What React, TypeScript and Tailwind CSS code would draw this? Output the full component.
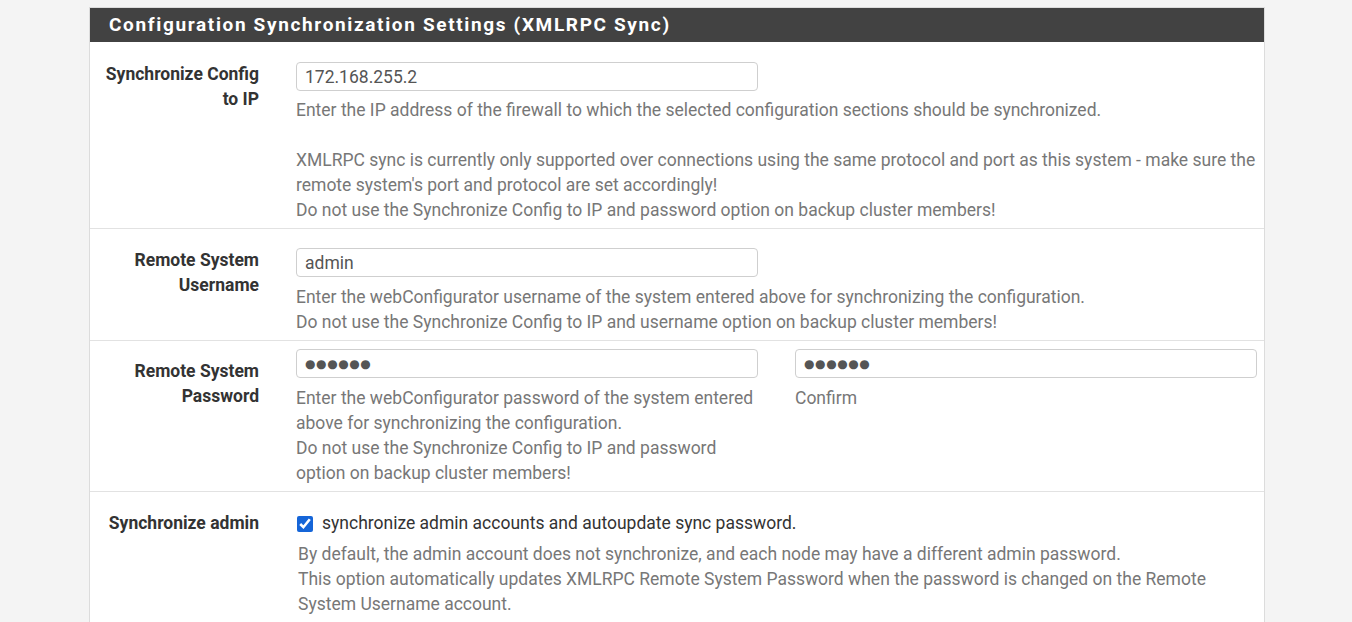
function Help({ children, className = "" }: { children: React.ReactNode; className?: string }) {
  return <div className={`text-[17.5px] leading-[25px] text-[#777] ${className}`}>{children}</div>;
}

function TextInput({ value, dots = false }: { value: string; dots?: boolean }) {
  return (
    <input
      type="text"
      readOnly
      defaultValue={value}
      className={`block w-[462px] h-[29px] rounded-[4px] border border-[#cfcfcf] bg-white text-[#555] outline-none ${
        dots
          ? "pl-[8px] text-[12px] tracking-[0.6px] font-['DejaVu_Sans',sans-serif]"
          : "px-[8px] text-[17.5px] font-[Roboto,sans-serif]"
      }`}
    />
  );
}

export default function App() {
  return (
    <div className="min-h-[622px] bg-[#f4f4f4] pt-[7px] font-[Roboto,sans-serif]">
      <div className="ml-[89px] w-[1176px] bg-white border-x border-t border-[#dcdcdc]">
        <div className="h-[34px] bg-[#424242] pl-[19px] flex items-center text-white text-[19px] font-bold tracking-[1.65px]">
          Configuration Synchronization Settings (XMLRPC Sync)
        </div>

        {/* Synchronize Config to IP */}
        <div className="flex pt-[20px] pb-[5px] border-b border-[#e2e2e2]">
          <div className="w-[169px] shrink-0 text-right font-bold text-[17.5px] leading-[25px] text-[#333]">
            Synchronize Config
            <br />
            to IP
          </div>
          <div className="ml-[37px]">
            <TextInput value="172.168.255.2" />
            <Help className="mt-[7px]">
              Enter the IP address of the firewall to which the selected configuration sections should be synchronized.
              <br />
              <br />
              XMLRPC sync is currently only supported over connections using the same protocol and port as this system - make sure the
              <br />
              remote system's port and protocol are set accordingly!
              <br />
              Do not use the Synchronize Config to IP and password option on backup cluster members!
            </Help>
          </div>
        </div>

        {/* Remote System Username */}
        <div className="flex pt-[19px] pb-[5px] border-b border-[#e2e2e2]">
          <div className="w-[169px] shrink-0 text-right font-bold text-[17.5px] leading-[25px] text-[#333]">
            Remote System
            <br />
            Username
          </div>
          <div className="ml-[37px]">
            <TextInput value="admin" />
            <Help className="mt-[8px]">
              Enter the webConfigurator username of the system entered above for synchronizing the configuration.
              <br />
              Do not use the Synchronize Config to IP and username option on backup cluster members!
            </Help>
          </div>
        </div>

        {/* Remote System Password */}
        <div className="flex pt-[8px] pb-[5px] border-b border-[#e2e2e2]">
          <div className="w-[169px] shrink-0 pt-[10px] text-right font-bold text-[17.5px] leading-[25px] text-[#333]">
            Remote System
            <br />
            Password
          </div>
          <div className="ml-[37px] w-[462px]">
            <TextInput value="●●●●●●" dots />
            <Help className="mt-[8px]">
              Enter the webConfigurator password of the system entered
              <br />
              above for synchronizing the configuration.
              <br />
              Do not use the Synchronize Config to IP and password
              <br />
              option on backup cluster members!
            </Help>
          </div>
          <div className="ml-[37px] w-[462px]">
            <TextInput value="●●●●●●" dots />
            <Help className="mt-[8px]">Confirm</Help>
          </div>
        </div>

        {/* Synchronize admin */}
        <div className="flex pt-[19px] pb-[7px]">
          <div className="w-[169px] shrink-0 text-right font-bold text-[17.5px] leading-[25px] text-[#333]">
            Synchronize admin
          </div>
          <div className="ml-[37px]">
            <label className="flex items-center h-[25px] text-[17.5px] text-[#333]">
              <input type="checkbox" defaultChecked className="ml-[1px] w-[16px] h-[16px] accent-[#1565d8]" />
              <span className="ml-[9px]">synchronize admin accounts and autoupdate sync password.</span>
            </label>
            <Help className="mt-[6px] ml-[2px]">
              By default, the admin account does not synchronize, and each node may have a different admin password.
              <br />
              This option automatically updates XMLRPC Remote System Password when the password is changed on the Remote
              <br />
              System Username account.
            </Help>
          </div>
        </div>
      </div>
    </div>
  );
}
